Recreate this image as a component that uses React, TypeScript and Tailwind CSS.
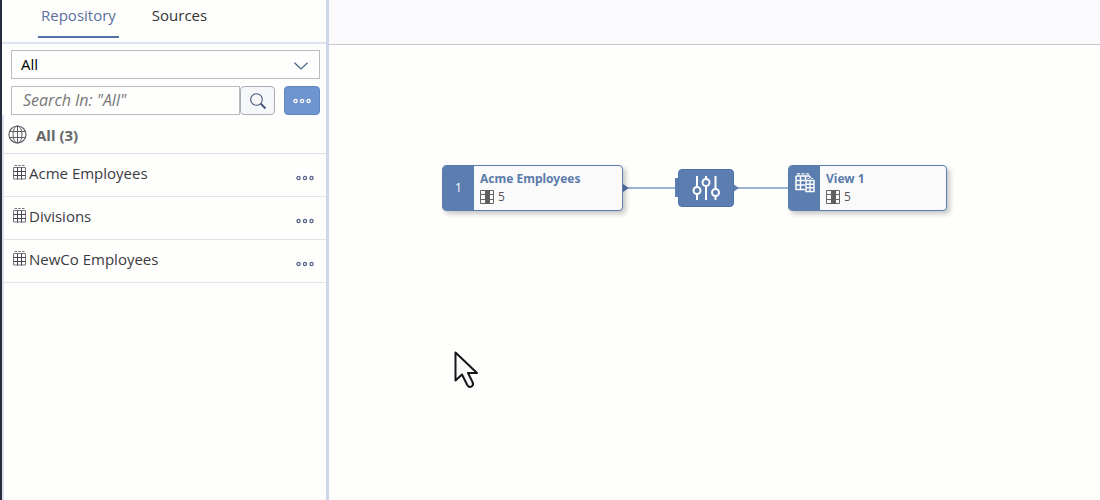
import React, { useState } from "react";

function Dots({ className }: { className?: string }) {
  return (
    <svg width="20" height="6" viewBox="0 0 20 6" fill="none" stroke="currentColor" className={className} aria-hidden="true">
      <circle cx="3.5" cy="3" r="1.6" strokeWidth="1.3" />
      <circle cx="10" cy="3" r="1.6" strokeWidth="1.3" />
      <circle cx="16.500" cy="3" r="1.6" strokeWidth="1.3" />
    </svg>
  );
}

function TableIcon() {
  return (
    <svg width="13" height="15" viewBox="0 0 13 15" fill="none" stroke="#4a4450" aria-hidden="true">
      <path d="M1.5 .5h2.5M5.2 .5h2.5M9 .5h2.5" stroke="#777" />
      <path d="M.5 2.5h12v11.500H.5z" stroke="#77727d" />
      <path d="M4.5 2.5v12M8.5 2.5v12M.5 6.5h12M.5 10.5h12" />
    </svg>
  );
}

function GlobeIcon() {
  return (
    <svg width="19" height="19" viewBox="0 0 19 19" fill="none" stroke="#5c5f66" aria-hidden="true">
      <circle cx="9.5" cy="9.5" r="8.5" strokeWidth="1.2" />
      <ellipse cx="9.5" cy="9.5" rx="4.5" ry="8.5" />
      <path d="M9.5 1v17M2 6.500h15M2 12.500h15" strokeWidth="1" />
    </svg>
  );
}

function ColumnsIcon() {
  return (
    <svg width="14" height="14" viewBox="0 0 14 14" fill="none" stroke="#666" aria-hidden="true">
      <path d="M.5 .5h13v13H.5zM.5 4.500h13M.5 9.5h13" />
      <path d="M5 0h5v14H5z" fill="#5f5f5f" stroke="none" />
    </svg>
  );
}

function ViewIcon() {
  return (
    <svg width="20" height="20" viewBox="0 0 20 20" fill="none" stroke="#fff" aria-hidden="true">
      <path d="M2 .8h3M6.5 .8h3M11 .8h3" strokeWidth="1.2" />
      <path d="M1 3h14M1 3v13.5h9M5.5 3v13.5M10.5 3v4M15 3v2M1 7.5h9M1 12h9" strokeWidth="1.5" />
      <path d="M11 7.500h8v11h-8zM15 7.500v11M11 11.200h8M11 14.800h8" strokeWidth="1.4" />
      <path d="M12.5 5.500h2M16 5.500h2" />
    </svg>
  );
}

function SlidersIcon() {
  return (
    <svg width="28" height="24" viewBox="0 0 28 24" fill="none" stroke="#fff" strokeWidth="2" aria-hidden="true">
      <path d="M5 0v11M5 18v6M14 0v3M14 10v14M23.500 0v13M23.500 20v4" />
      <circle cx="5" cy="14.500" r="3.500" />
      <circle cx="14" cy="6.500" r="3.500" />
      <circle cx="23.500" cy="16.500" r="3.500" />
    </svg>
  );
}

function FlowNode({ badge, title, count, className }: { badge: React.ReactNode; title: string; count: number; className: string }) {
  return (
    <article className={"absolute flex h-[46px] overflow-hidden rounded border border-[#5b7db0] bg-[#fafafb] shadow-[3px_3px_5px_rgba(0,0,0,0.22)] " + className}>
      <div className="flex w-[31px] shrink-0 justify-center bg-[#5b7db0] text-white">{badge}</div>
      <div className="flex flex-col px-[6px] pt-[5px]">
        <h3 className="font-['Noto_Sans','Open_Sans',sans-serif] text-xs leading-4 font-bold whitespace-nowrap text-[#5b7aaa]">{title}</h3>
        <p className="mt-[2px] flex items-center gap-1 text-xs leading-4 text-[#555]">
          <ColumnsIcon />
          {count}
        </p>
      </div>
    </article>
  );
}

const entities = ["Acme Employees", "Divisions", "NewCo Employees"];

export default function App() {
  const [tab, setTab] = useState("Repository");
  return (
    <div className="flex min-h-screen bg-[#fefefd] font-['Open_Sans','Noto_Sans',sans-serif] text-[15px] text-[#333]">
      <aside className="flex w-[329px] shrink-0 flex-col border-r-[3px] border-l-2 border-r-[#ced6ea] border-l-[#272d3b]">
        <nav className="flex h-11 items-start gap-[33px] border-b-2 border-[#dce3f1] pl-9">
          {["Repository", "Sources"].map((name) => (
            <button
              key={name}
              type="button"
              onClick={() => setTab(name)}
              className={
                "h-[38px] border-b-2 pb-[7px] text-[15px] leading-5 " +
                (tab === name ? "border-[#5372a6] px-[3px] text-[#5a6f9c]" : "border-transparent text-[#333]")
              }
            >
              {name}
            </button>
          ))}
        </nav>
        <div className="flex flex-col gap-[7px] pt-[6px] pr-[6px] pl-[9px]">
          <div className="relative flex">
            <select aria-label="Filter" className="h-[29px] w-full appearance-none border border-[#bcbcbc] bg-[#fefefd] pl-[9px] text-[15px] text-black">
              <option>All</option>
            </select>
            <svg width="14" height="8" viewBox="0 0 14 8" fill="none" stroke="#4b658f" strokeWidth="1.3" className="pointer-events-none absolute top-3 right-3" aria-hidden="true">
              <path d="M.5 .7 7 6.900 13.500 .7" />
            </svg>
          </div>
          <div className="flex h-[29px]">
            <input
              type="search"
              aria-label="Search"
              placeholder={'Search In: "All"'}
              className="min-w-0 flex-1 border border-[#bcbcbc] bg-[#fefefd] pb-[2px] pl-[11px] text-base italic placeholder:text-[#777]"
            />
            <button type="button" aria-label="Run search" className="flex w-[35px] items-center justify-center rounded border border-[#a9adb5] bg-[#f6f7f8]">
              <svg width="18" height="18" viewBox="0 0 18 18" fill="none" stroke="#46597c" aria-hidden="true">
                <circle cx="7.500" cy="7.500" r="5.800" strokeWidth="1.1" />
                <path d="m11.800 11.800 4.700 4.700" strokeWidth="2" />
              </svg>
            </button>
            <button type="button" aria-label="More actions" className="ml-[9px] flex w-9 items-center justify-center rounded border border-[#5f87c2] bg-[#6e95cd] text-white">
              <Dots />
            </button>
          </div>
        </div>
        <div className="flex flex-1 flex-col border-l-2 border-[#dbe1f0]">
          <h2 className="flex h-[39px] items-center gap-[9px] border-b border-[#dbe1ec] pl-1 font-bold text-[#666]">
            <GlobeIcon />
            <span className="pt-[2px]">All (3)</span>
          </h2>
          <ul>
            {entities.map((name) => (
              <li key={name} className="flex h-[43px] items-center border-b border-[#e4e4e6] pr-[11px] pl-[9px]">
                <span className="pb-[6px]">
                  <TableIcon />
                </span>
                <span className="flex-1 pb-1 pl-[3px] text-[#3b3b3f]">{name}</span>
                <button type="button" aria-label={"Actions for " + name} className="pt-[6px] text-[#56658a]">
                  <Dots />
                </button>
              </li>
            ))}
          </ul>
        </div>
      </aside>
      <div className="flex min-w-0 flex-1 flex-col">
        <header className="h-[45px] border-b border-[#c9c9cb] bg-[#fafafc]" />
        <main className="relative flex-1 overflow-hidden">
          <svg width="166" height="10" viewBox="0 0 166 10" className="absolute top-[138px] left-[294px]" aria-hidden="true">
            <path d="M0 5h166" stroke="#7d9ac5" strokeWidth="1.500" />
            <path d="M0 1 6 5 0 9zM110 1 116 5 110 9z" fill="#5b7db0" />
          </svg>
          <FlowNode badge={<span className="self-center text-xs">1</span>} title="Acme Employees" count={5} className="top-[120px] left-[113px] w-[181px]" />
          <div className="absolute top-[133px] left-[346px] h-[19px] w-[5px] bg-[#5b7db0]" />
          <button type="button" aria-label="Projection" className="absolute top-[124px] left-[349px] flex h-[38px] w-[56px] items-center justify-center rounded border border-[#4f74ab] bg-[#5b7db0]">
            <SlidersIcon />
          </button>
          <FlowNode badge={<span className="pt-[7px]"><ViewIcon /></span>} title="View 1" count={5} className="top-[120px] left-[459px] w-[159px]" />
          <svg width="26" height="38" viewBox="0 0 26 38" className="absolute top-[306px] left-[125px]" aria-hidden="true">
            <path d="M1.500 1.500v28l6.500-6 5 10q2 3.500 4.500 2t1-4.500l-4.500-9H23z" fill="#fafafa" stroke="#15151b" strokeWidth="2" strokeLinejoin="round" />
          </svg>
        </main>
      </div>
    </div>
  );
}
